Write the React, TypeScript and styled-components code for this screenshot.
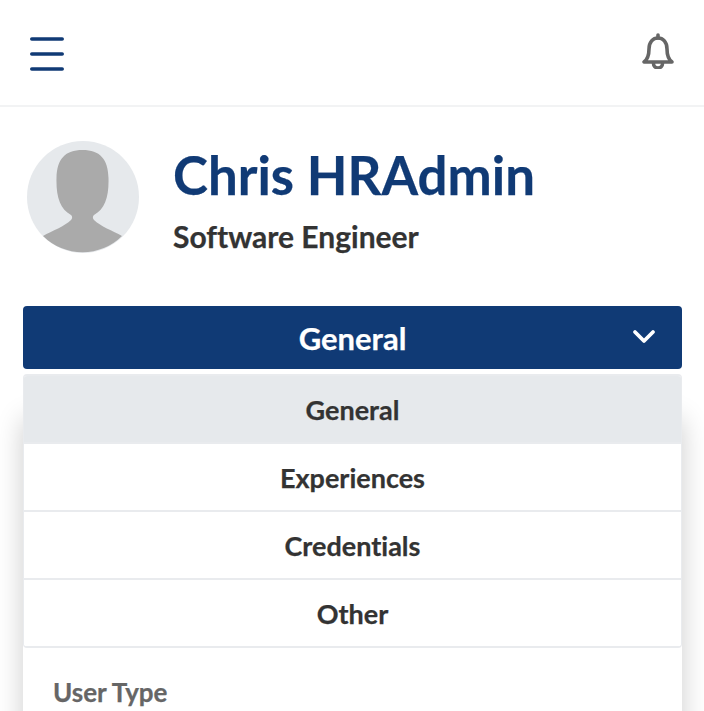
import React from "react";
import styled, { createGlobalStyle } from "styled-components";

const Global = createGlobalStyle`
  html, body { margin: 0; padding: 0; background: #fff; }
  body {
    font-family: Lato, "Liberation Sans", sans-serif;
    font-variant-ligatures: none;
    overflow: hidden;
    -webkit-text-stroke: 0.25px currentColor;
  }
`;

const Page = styled.div`
  width: 704px;
  height: 711px;
  overflow: hidden;
  background: #fff;
`;

const TopBar = styled.header`
  height: 102px;
  box-sizing: content-box;
  border-bottom: 2px solid #f2f3f4;
  display: flex;
  align-items: center;
  justify-content: space-between;
  padding: 3px 29px 0 30px;
`;

const IconButton = styled.button`
  border: 0;
  padding: 0;
  background: none;
  display: flex;
`;

const BellButton = styled(IconButton)`
  margin-bottom: 6px;
`;

const Profile = styled.section`
  display: flex;
  align-items: center;
  gap: 34px;
  padding: 34px 0 0 27px;
  height: 112px;
`;

const Names = styled.div`
  display: flex;
  flex-direction: column;
`;

const Name = styled.h1`
  margin: 0;
  font-size: 52.8px;
  line-height: 62px;
  font-weight: 700;
  color: #103a75;
  margin-top: 3px;
`;

const Role = styled.p`
  margin: 12px 0 0;
  font-size: 30px;
  line-height: 36px;
  font-weight: 700;
  color: #333;
`;

const Section = styled.div`
  position: relative;
  margin: 53px 22px 0 23px;
`;

const SelectButton = styled.div`
  height: 63px;
  border-radius: 4px;
  background: #103a75;
  color: #fff;
  font-size: 31px;
  font-weight: 700;
  display: flex;
  align-items: center;
  justify-content: center;
  position: relative;
`;

const Chevron = styled.svg`
  position: absolute;
  right: 26px;
  top: 23px;
`;

const Menu = styled.ul`
  position: absolute;
  z-index: 2;
  top: 68px;
  left: 0;
  right: 0;
  margin: 0;
  padding: 0;
  list-style: none;
  background: #fff;
  border: solid #e9ebee;
  border-width: 2px 1.5px;
  border-radius: 4px;
  overflow: hidden;
`;

const MenuItem = styled.li<{ $active?: boolean }>`
  height: 66px;
  display: flex;
  align-items: center;
  justify-content: center;
  font-size: 27px;
  font-weight: 700;
  color: #333;
  background: ${(p) => (p.$active ? "#e6e9ec" : "#fff")};
  border-bottom: 2px solid #e9ebee;
  &:last-child {
    border-bottom: 0;
  }
`;

const Card = styled.div`
  margin-top: 50px;
  height: 400px;
  background: #fff;
  box-shadow: 0 0 26px rgba(0, 0, 0, 0.2);
  padding: 258px 30px 0;
`;

const FieldLabel = styled.div`
  font-size: 26px;
  line-height: 30px;
  font-weight: 700;
  color: #666;
`;

const Avatar = () => (
  <svg width="112" height="112" viewBox="0 0 112 112">
    <circle cx="56" cy="56" r="56" fill="#e6e9ec" />
    <path
      d="M55.500 9C38 9 30 18 29.500 37C29 56 33 68 44 74C45.500 75 45.500 77.500 44 79C38 85 25 90 16 95A56 56 0 0 0 95 95C86 90 73 85 67 79C65.500 77.500 65.500 75 67 74C78 68 82 56 81.500 37C81 18 73 9 55.500 9z"
      fill="#aaaaaa"
    />
  </svg>
);

const items = ["General", "Experiences", "Credentials", "Other"];

export default function App() {
  return (
    <Page>
      <Global />
      <TopBar>
        <IconButton aria-label="Menu">
          <svg width="34" height="36" viewBox="0 0 34 36" fill="none" stroke="#103a75" strokeWidth="3.600" strokeLinecap="round">
            <path d="M1.800 3h30.400M1.800 18h30.400M1.800 33h30.400" />
          </svg>
        </IconButton>
        <BellButton aria-label="Notifications">
          <svg width="34" height="36" viewBox="0 0 34 36" fill="none" stroke="#666" strokeWidth="3.600" strokeLinecap="round" strokeLinejoin="round">
            <path d="M17 2v3" />
            <path d="M3 29h28c-4-3-5-7-5-13 0-7-4-11-9-11s-9 4-9 11c0 6-1 10-5 13z" />
            <path d="M12.500 30.500a4.500 4.500 0 0 0 9 0" />
          </svg>
        </BellButton>
      </TopBar>
      <Profile>
        <Avatar />
        <Names>
          <Name>Chris HRAdmin</Name>
          <Role>Software Engineer</Role>
        </Names>
      </Profile>
      <Section>
        <SelectButton>
          General
          <Chevron width="24" height="16" viewBox="0 0 24 16" fill="none" stroke="#fff" strokeWidth="3.800" strokeLinecap="round" strokeLinejoin="round">
            <path d="M3 3l9 9 9-9" />
          </Chevron>
        </SelectButton>
        <Menu>
          {items.map((item, i) => (
            <MenuItem key={item} $active={i === 0}>
              {item}
            </MenuItem>
          ))}
        </Menu>
        <Card>
          <FieldLabel>User Type</FieldLabel>
        </Card>
      </Section>
    </Page>
  );
}
